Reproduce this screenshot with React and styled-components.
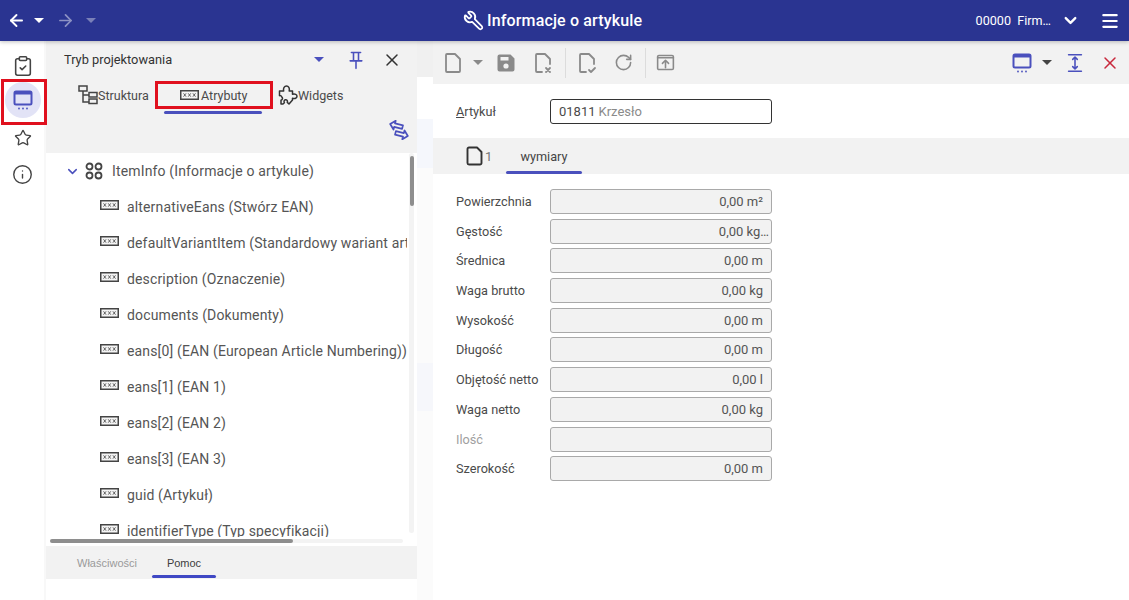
import React from 'react';
import styled, { createGlobalStyle } from 'styled-components';
import { ArrowLeft, ArrowRight, ChevronDown, ClipboardCheck, Star, Info, X, Wrench, Menu, RotateCw } from 'lucide-react';

const GlobalStyle = createGlobalStyle`
  html, body { margin: 0; padding: 0; height: 100%; overflow: hidden; background: #fff; }
  body { font-family: Roboto, "Liberation Sans", sans-serif; color: #3d3d3d; }
  #root { height: 100%; }
`;

const Page = styled.div`
  position: relative;
  width: 1129px;
  height: 600px;
  display: flex;
  flex-direction: column;
  overflow: hidden;
`;

const Header = styled.header`
  height: 41px;
  flex: none;
  background: #2a3491;
  color: #fff;
  display: grid;
  grid-template-columns: 454px auto 1fr;
  align-items: center;
  padding: 0 9px 0 9px;
  box-shadow: 0 1px 4px rgba(0, 0, 0, 0.25);
  z-index: 2;
`;

const HeaderLeft = styled.div`
  display: flex;
  align-items: center;
  margin-left: -2px;
`;

const HeaderTitle = styled.div`
  display: flex;
  align-items: center;
  gap: 3px;
  font-size: 16px;
  font-weight: 500;
  letter-spacing: 0.15px;
`;

const FlippedWrench = styled(Wrench)`
  transform: scaleX(-1);
`;

const HeaderRight = styled.div`
  display: flex;
  align-items: center;
  justify-content: flex-end;
  font-size: 12.6px;
`;

const Slot = styled.span`
  display: flex;
  flex: none;
  margin-left: ${p => p.$left || 0}px;
  margin-right: ${p => p.$right || 0}px;
`;

const Caret = styled.span`
  display: inline-block;
  flex: none;
  width: 0;
  height: 0;
  margin-left: ${p => p.$left || 0}px;
  border-left: 5px solid transparent;
  border-right: 5px solid transparent;
  border-top: 5px solid ${p => p.$color || '#fff'};
`;

const Body = styled.div`
  flex: 1;
  display: flex;
  min-height: 0;
`;

const Rail = styled.nav`
  width: 46px;
  flex: none;
  display: flex;
  flex-direction: column;
  align-items: center;
  padding-top: 7px;
  background: #fff;
  box-shadow: inset -2px 0 0 #f8f8f8;
`;

const RailButton = styled.div`
  width: 36px;
  height: 36px;
  flex: none;
  border-radius: 50%;
  display: flex;
  align-items: center;
  justify-content: center;
  margin: ${p => (p.$active ? '-2px 0 2px -1px' : '0 0 0 -1px')};
  background: ${p => (p.$active ? '#e2e3f6' : 'transparent')};
`;

const Panel = styled.aside`
  width: 371px;
  flex: none;
  display: flex;
  flex-direction: column;
  background: #fff;
`;

const PanelHead = styled.div`
  height: 112px;
  flex: none;
  background: #f2f2f2;
  display: flex;
  flex-direction: column;
`;

const PanelTitleRow = styled.div`
  height: 37px;
  display: flex;
  align-items: center;
  padding: 0 15px 0 18px;
  font-size: 12.8px;
  color: #333;
`;

const PanelTitle = styled.span`
  flex: 1;
`;

const PanelActions = styled.div`
  display: flex;
  align-items: center;
  gap: 16px;
`;

const ModeTabs = styled.div`
  display: flex;
  height: 36px;
  padding-left: 32px;
`;

const ModeTab = styled.div`
  width: ${p => p.$width}px;
  height: 35px;
  display: flex;
  align-items: center;
  gap: ${p => (p.$active ? 2 : 0)}px;
  padding-left: ${p => (p.$active ? 24 : 0)}px;
  font-size: 12.5px;
  color: #4a4a4a;
  position: relative;
  padding-bottom: 1px;
  box-sizing: border-box;
  &::after {
    content: '';
    display: ${p => (p.$active ? 'block' : 'none')};
    position: absolute;
    left: 8px;
    bottom: -1px;
    width: 98px;
    height: 3px;
    border-radius: 2px;
    background: #4a50bd;
  }
`;

const SwapRow = styled.div`
  display: flex;
  justify-content: flex-end;
  padding: 6px 7px 0 0;
`;

const TreeBox = styled.div`
  position: relative;
  flex: none;
  height: 393px;
  overflow: hidden;
  background: #fff;
`;

const TreeList = styled.div`
  height: 384px;
  overflow: hidden;
`;

const TreeRow = styled.div`
  height: 36px;
  display: flex;
  align-items: center;
  padding-left: ${p => (p.$root ? 19 : 54)}px;
  font-size: 14px;
  letter-spacing: 0.15px;
  color: #555;
  white-space: nowrap;
  width: 361px;
  overflow: hidden;
  box-sizing: border-box;
`;

const RootIcons = styled.span`
  display: flex;
  align-items: center;
  gap: 5px;
  margin-right: 9px;
`;

const FieldGlyph = styled.span`
  margin-right: 8px;
  display: flex;
  margin-top: -4px;
`;

const VScroll = styled.div`
  position: absolute;
  top: 0;
  right: 3px;
  width: 5px;
  height: 380px;
  border-radius: 3px;
  background: #f3f3f3;
  &::after {
    content: '';
    display: block;
    width: 4px;
    margin-left: 1px;
    height: 50px;
    border-radius: 2px;
    background: #8e8e8e;
    margin-top: 3px;
  }
`;

const HScroll = styled.div`
  position: absolute;
  left: 4px;
  bottom: 3px;
  width: 353px;
  height: 4px;
  border-radius: 2px;
  background: #f3f3f3;
  &::after {
    content: '';
    display: block;
    width: 243px;
    height: 4px;
    border-radius: 2px;
    background: #8e8e8e;
  }
`;

const BottomTabs = styled.div`
  height: 33px;
  flex: none;
  background: #f2f2f2;
  display: flex;
  gap: 8px;
  padding-left: 24px;
  font-family: "Liberation Sans", Arial, sans-serif;
  font-size: 11px;
`;

const BottomTab = styled.div`
  width: ${p => p.$width}px;
  display: flex;
  align-items: center;
  justify-content: center;
  color: ${p => (p.$active ? '#3d3d3d' : '#9a9a9a')};
  position: relative;
  &::after {
    content: '';
    display: ${p => (p.$active ? 'block' : 'none')};
    position: absolute;
    left: 0;
    right: 0;
    bottom: 1px;
    height: 3px;
    border-radius: 2px;
    background: #3f48c4;
  }
`;

const Gutter = styled.div`
  width: 16px;
  flex: none;
  display: flex;
  flex-direction: column;
  background: #fbfbfb;
`;

const GutterBand = styled.div`
  flex: none;
  height: ${p => p.$height}px;
  background: ${p => p.$color};
`;

const Main = styled.main`
  flex: 1;
  min-width: 0;
  display: flex;
  flex-direction: column;
`;

const Toolbar = styled.div`
  height: 43px;
  flex: none;
  background: #f2f2f2;
  display: flex;
  align-items: center;
  padding: 0 9px 0 8px;
`;

const ToolGroup = styled.div`
  display: flex;
  align-items: center;
`;

const ToolSep = styled.div`
  width: 1px;
  height: 30px;
  background: #dcdcdc;
  margin: 0 ${p => p.$right}px 0 ${p => p.$left}px;
`;

const ToolSpacer = styled.div`
  flex: 1;
`;

const ArticleRow = styled.div`
  height: 54px;
  flex: none;
  display: flex;
  align-items: center;
  padding-left: 23px;
`;

const Label = styled.label`
  width: 94px;
  flex: none;
  font-size: 12.7px;
  color: ${p => (p.$muted ? '#a0a0a0' : '#4a4a4a')};
`;

const Underlined = styled.span`
  text-decoration: underline;
`;

const ArticleInput = styled.div`
  width: 212px;
  height: 23px;
  border: 1px solid #333;
  border-radius: 3px;
  display: flex;
  align-items: center;
  padding-left: 8px;
  font-size: 13px;
  color: #4a4a4a;
`;

const Muted = styled.span`
  color: #8a8a8a;
  margin-left: 3px;
`;

const SectionTabs = styled.div`
  height: 36px;
  flex: none;
  background: #f2f2f2;
  display: flex;
  padding-left: 33px;
`;

const DocTab = styled.div`
  width: 40px;
  display: flex;
  align-items: center;
  font-size: 13px;
  color: #777;
  gap: 1px;
`;

const SectionTab = styled.div`
  width: 76px;
  display: flex;
  align-items: center;
  justify-content: center;
  font-size: 12.7px;
  color: #444;
  position: relative;
  &::after {
    content: '';
    position: absolute;
    left: 0;
    right: 0;
    bottom: 0;
    height: 3px;
    border-radius: 2px;
    background: #4a50bd;
  }
`;

const Fields = styled.div`
  display: flex;
  flex-direction: column;
  gap: 4.7px;
  padding: 15px 0 0 23px;
`;

const FieldRow = styled.div`
  display: flex;
  align-items: center;
`;

const ValueBox = styled.div`
  height: 23px;
  border: 1px solid #a9a9a9;
  border-radius: 3px;
  background: #f2f2f2;
  display: flex;
  align-items: center;
  justify-content: flex-end;
  padding-right: ${p => (p.$tight ? 2 : 8)}px;
  width: ${p => (p.$tight ? 218 : 212)}px;
  font-size: 13px;
  color: #555;
`;

const Mark = styled.div`
  position: absolute;
  box-sizing: border-box;
  border: 3px solid #e0101e;
  left: ${p => p.$x}px;
  top: ${p => p.$y}px;
  width: ${p => p.$w}px;
  height: ${p => p.$h}px;
  pointer-events: none;
  z-index: 5;
`;

const accent = '#4a50bd';
const toolGrey = '#8a8a8a';

const LineIcon = ({ size = 24, color = toolGrey, children, strokeWidth = 1.8 }) => (
  <svg width={size} height={size} viewBox="0 0 24 24" fill="none" stroke={color} strokeWidth={strokeWidth} strokeLinecap="round" strokeLinejoin="round">
    {children}
  </svg>
);

const WindowIcon = ({ color, size = 22 }) => (
  <svg width={size} height={size} viewBox="0 0 22 22" fill="none">
    <rect x="2.5" y="2.5" width="17" height="13" rx="1.5" stroke={color} strokeWidth="2" />
    <rect x="2.5" y="2.5" width="17" height="3" fill={color} />
    <circle cx="7" cy="19.5" r="0.9" fill={color} />
    <circle cx="11" cy="19.5" r="0.9" fill={color} />
    <circle cx="15" cy="19.5" r="0.9" fill={color} />
  </svg>
);

const FieldIcon = () => (
  <svg width="19" height="10" viewBox="0 0 19 10" fill="none">
    <rect x="0.75" y="0.75" width="17.5" height="8.5" fill="#f4f4f4" stroke="#444" strokeWidth="1.5" />
    <path d="M3.5 3.3l2.6 3.4M6.1 3.3L3.5 6.7M8.2 3.3l2.6 3.4M10.8 3.3L8.2 6.7M12.9 3.3l2.6 3.4M15.5 3.3l-2.6 3.4" stroke="#555" strokeWidth="0.9" />
  </svg>
);

const TreeIcon = () => (
  <svg width="20" height="20" viewBox="0 0 20 20" fill="none" stroke="#444" strokeWidth="1.5">
    <rect x="1" y="1" width="8" height="5" />
    <rect x="11" y="7.5" width="8" height="4.5" />
    <rect x="11" y="14" width="8" height="4.5" />
    <path d="M5 6v11h6M5 10h6" />
  </svg>
);

const PuzzleIcon = () => (
  <svg width="20" height="20" viewBox="0 0 20 20" fill="none" stroke="#333" strokeWidth="1.5" strokeLinejoin="round">
    <path d="M1.5 6h4.2C5 3 6.5 1 8.5 1s3.300 2 2.700 5h3.300v3.300c2.500-.8 4.500.3 4.500 2s-2 2.800-4.500 2v1.700l-3.500 4-1.700-1.600c.6-2-.8-2.900-1.900-2.600-1.100.3-1.800 1.300-1 3l-1.400 1.200H3v-3.700c1.500-.6 1.800-1.800 1.200-2.800S2.800 10 1.500 10.700z" />
  </svg>
);

const PinIcon = () => (
  <LineIcon size={20} color={accent} strokeWidth={1.9}>
    <path d="M6.5 3h11M9 3v10M15 3v10M5 13h14M12 13v9" />
  </LineIcon>
);

const SwapIcon = () => (
  <svg width="22" height="20" viewBox="0 0 24 22" fill="none" stroke={accent} strokeWidth="1.9" strokeLinejoin="round">
    <g transform="rotate(14 12 11)">
      <path d="M1 7l5-5v3h9v4H6v3z" />
      <path d="M23 15l-5-5v3H9v4h9v3z" />
    </g>
  </svg>
);

const SaveIcon = () => (
  <svg width="18" height="18" viewBox="0 0 18 18">
    <path d="M2.5 0.5H13.5L17.5 4.5V15.5a2 2 0 0 1-2 2H2.5a2 2 0 0 1-2-2V2.5a2 2 0 0 1 2-2z" fill={toolGrey} />
    <rect x="3.5" y="3" width="8" height="3.5" fill="#f2f2f2" />
    <circle cx="9" cy="12" r="2.6" fill="#f2f2f2" />
  </svg>
);

const fieldNames = [
  'alternativeEans (Stwórz EAN)',
  'defaultVariantItem (Standardowy wariant artykułu)',
  'description (Oznaczenie)',
  'documents (Dokumenty)',
  'eans[0] (EAN (European Article Numbering))',
  'eans[1] (EAN 1)',
  'eans[2] (EAN 2)',
  'eans[3] (EAN 3)',
  'guid (Artykuł)',
  'identifierType (Typ specyfikacji)',
];

const measures = [
  { label: 'Powierzchnia', value: '0,00 m²' },
  { label: 'Gęstość', value: '0,00 kg…', tight: true },
  { label: 'Średnica', value: '0,00 m' },
  { label: 'Waga brutto', value: '0,00 kg' },
  { label: 'Wysokość', value: '0,00 m' },
  { label: 'Długość', value: '0,00 m' },
  { label: 'Objętość netto', value: '0,00 l' },
  { label: 'Waga netto', value: '0,00 kg' },
  { label: 'Ilość', value: '', muted: true },
  { label: 'Szerokość', value: '0,00 m' },
];

const gutterBands = [
  { height: 36, color: '#f0f0f0' },
  { height: 42, color: '#ffffff' },
  { height: 49, color: '#f5f7fc' },
  { height: 195, color: '#fbfbfb' },
  { height: 48, color: '#f6f7fb' },
];

const App = () => (
  <Page>
    <GlobalStyle />
    <Header>
      <HeaderLeft>
        <ArrowLeft size={19} color="#fff" strokeWidth={2.4} />
        <Caret $left={8} />
        <Slot $left={12}><ArrowRight size={19} color="#8d92c4" strokeWidth={2.2} /></Slot>
        <Caret $left={11} $color="#7a80b8" />
      </HeaderLeft>
      <HeaderTitle>
        <FlippedWrench size={21} color="#fff" strokeWidth={2} />
        Informacje o artykule
      </HeaderTitle>
      <HeaderRight>
        00000&nbsp; Firm…
        <Slot $left={10} $right={20}><ChevronDown size={19} color="#fff" strokeWidth={3} /></Slot>
        <Menu size={20} color="#fff" strokeWidth={2.6} />
      </HeaderRight>
    </Header>
    <Body>
      <Rail>
        <RailButton><ClipboardCheck size={22} color="#444" strokeWidth={1.7} /></RailButton>
        <RailButton $active><WindowIcon color={accent} /></RailButton>
        <RailButton><Star size={18} color="#444" strokeWidth={1.8} /></RailButton>
        <RailButton><Info size={21} color="#444" strokeWidth={1.6} /></RailButton>
      </Rail>
      <Panel>
        <PanelHead>
          <PanelTitleRow>
            <PanelTitle>Tryb projektowania</PanelTitle>
            <PanelActions>
              <Slot $right={6}><Caret $color={accent} /></Slot>
              <PinIcon />
              <X size={20} color="#333" strokeWidth={1.8} />
            </PanelActions>
          </PanelTitleRow>
          <ModeTabs>
            <ModeTab $width={78}><TreeIcon />Struktura</ModeTab>
            <ModeTab $width={122} $active><FieldIcon />Atrybuty</ModeTab>
            <ModeTab $width={80}><PuzzleIcon />Widgets</ModeTab>
          </ModeTabs>
          <SwapRow><SwapIcon /></SwapRow>
        </PanelHead>
        <TreeBox>
          <TreeList>
            <TreeRow $root>
              <RootIcons>
                <ChevronDown size={15} color={accent} strokeWidth={2.4} />
                <svg width="18" height="18" viewBox="0 0 18 18" fill="none" stroke="#444" strokeWidth="1.8">
                  <circle cx="4.5" cy="4.5" r="3" />
                  <circle cx="13.5" cy="4.5" r="3" />
                  <circle cx="4.5" cy="13.5" r="3" />
                  <circle cx="13.5" cy="13.5" r="3" />
                </svg>
              </RootIcons>
              ItemInfo (Informacje o artykule)
            </TreeRow>
            {fieldNames.map(name => (
              <TreeRow key={name}>
                <FieldGlyph><FieldIcon /></FieldGlyph>
                {name}
              </TreeRow>
            ))}
          </TreeList>
          <VScroll />
          <HScroll />
        </TreeBox>
        <BottomTabs>
          <BottomTab $width={74}>Właściwości</BottomTab>
          <BottomTab $width={64} $active>Pomoc</BottomTab>
        </BottomTabs>
      </Panel>
      <Gutter>
        {gutterBands.map((band, i) => (
          <GutterBand key={i} $height={band.height} $color={band.color} />
        ))}
      </Gutter>
      <Main>
        <Toolbar>
          <ToolGroup>
            <LineIcon><path d="M14 3H6a1 1 0 0 0-1 1v16a1 1 0 0 0 1 1h12a1 1 0 0 0 1-1V8z" /></LineIcon>
            <Caret $left={8} $color={toolGrey} />
            <Slot $left={14}><SaveIcon /></Slot>
            <Slot $left={16}>
              <LineIcon><path d="M11 21H6a1 1 0 0 1-1-1V4a1 1 0 0 1 1-1h8l5 5v5M15 17l4 4M19 17l-4 4" /></LineIcon>
            </Slot>
          </ToolGroup>
          <ToolSep $left={10} $right={9} />
          <ToolGroup>
            <LineIcon><path d="M11 21H6a1 1 0 0 1-1-1V4a1 1 0 0 1 1-1h8l5 5v5M14 19l2 2 4-4" /></LineIcon>
            <Slot $left={15}><RotateCw size={19} color={toolGrey} /></Slot>
          </ToolGroup>
          <ToolSep $left={12} $right={9} />
          <ToolGroup>
            <LineIcon size={21}>
              <rect x="3" y="4" width="18" height="16" rx="1.5" />
              <path d="M3 6.5h18M12 18v-8M8.5 13l3.500-3.500 3.500 3.500" />
            </LineIcon>
          </ToolGroup>
          <ToolSpacer />
          <ToolGroup>
            <WindowIcon color={accent} />
            <Caret $left={9} $color="#444" />
            <Slot $left={12}>
              <LineIcon size={22} color={accent} strokeWidth={1.7}>
                <path d="M5 3h14M5 21h14M12 6v12M9.5 8L12 5.5 14.5 8M9.5 16l2.500 2.500 2.500-2.500" />
              </LineIcon>
            </Slot>
            <Slot $left={14}><X size={20} color="#c8283c" strokeWidth={1.8} /></Slot>
          </ToolGroup>
        </Toolbar>
        <ArticleRow>
          <Label><Underlined>A</Underlined>rtykuł</Label>
          <ArticleInput>01811<Muted>Krzesło</Muted></ArticleInput>
        </ArticleRow>
        <SectionTabs>
          <DocTab>
            <svg width="18" height="20" viewBox="0 0 18 20" fill="none" stroke="#333" strokeWidth="1.9" strokeLinejoin="round">
              <path d="M11 1.5H3a1.5 1.5 0 0 0-1.5 1.5v14A1.5 1.5 0 0 0 3 18.5h11a1.500 1.500 0 0 0 1.500-1.500V6z" />
            </svg>
            1
          </DocTab>
          <SectionTab>wymiary</SectionTab>
        </SectionTabs>
        <Fields>
          {measures.map(m => (
            <FieldRow key={m.label}>
              <Label $muted={m.muted}>{m.label}</Label>
              <ValueBox $tight={m.tight}>{m.value}</ValueBox>
            </FieldRow>
          ))}
        </Fields>
      </Main>
    </Body>
    <Mark $x={1} $y={79} $w={46} $h={46} />
    <Mark $x={155} $y={81} $w={118} $h={28} />
  </Page>
);

export default App;
